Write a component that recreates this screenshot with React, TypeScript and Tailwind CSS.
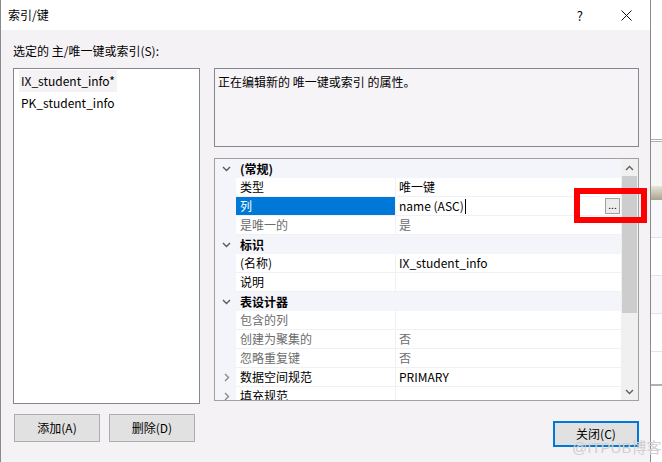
import React from "react";

type Row =
    | { kind: "cat"; label: string }
    | { kind: "prop"; name: string; value: string; gray?: boolean; expand?: boolean; selected?: boolean };

const rows: Row[] = [
    { kind: "cat", label: "(常规)" },
    { kind: "prop", name: "类型", value: "唯一键" },
    { kind: "prop", name: "列", value: "name (ASC)", selected: true },
    { kind: "prop", name: "是唯一的", value: "是", gray: true },
    { kind: "cat", label: "标识" },
    { kind: "prop", name: "(名称)", value: "IX_student_info" },
    { kind: "prop", name: "说明", value: "" },
    { kind: "cat", label: "表设计器" },
    { kind: "prop", name: "包含的列", value: "", gray: true },
    { kind: "prop", name: "创建为聚集的", value: "否", gray: true },
    { kind: "prop", name: "忽略重复键", value: "否", gray: true },
    { kind: "prop", name: "数据空间规范", value: "PRIMARY", expand: true },
    { kind: "prop", name: "填充规范", value: "", expand: true },
];

function Chevron({ open }: { open: boolean }) {
    return open ? (
        <svg width="9" height="6" viewBox="0 0 9 6" className="shrink-0">
            <polyline points="1,1 4.5,4.5 8,1" fill="none" stroke="#5a5a5a" strokeWidth="1.4" />
        </svg>
    ) : (
        <svg width="6" height="9" viewBox="0 0 6 9" className="shrink-0">
            <polyline points="1,1 4.5,4.5 1,8" fill="none" stroke="#8a8a8a" strokeWidth="1.4" />
        </svg>
    );
}

function PropertyRow({ row }: { row: Row }) {
    if (row.kind === "cat") {
        return (
            <div className="flex h-[19px] items-center bg-[#f4f4fb]">
                <div className="flex w-[21px] shrink-0 justify-center pl-[1px]">
                    <Chevron open />
                </div>
                <div className="pl-[4px] font-bold">{row.label}</div>
            </div>
        );
    }
    return (
        <div className="flex h-[19px] items-stretch">
            <div className="flex w-[21px] shrink-0 items-center justify-center bg-[#f4f4fb] pl-[3px]">
                {row.expand && <Chevron open={false} />}
            </div>
            <div
                className={`flex w-[160px] shrink-0 items-center border-b border-r border-[#f0f0f6] pl-[4px] ${
                    row.selected ? "bg-[#0078d7] text-white" : row.gray ? "text-[#6d6d6d]" : ""
                }`}
            >
                {row.name}
            </div>
            <div
                className={`flex flex-1 items-center border-b border-[#f0f0f6] pl-[3px] ${
                    row.gray ? "text-[#6d6d6d]" : ""
                }`}
            >
                {row.value}
                {row.selected && <span className="ml-[1px] h-[15px] w-px bg-black" />}
                {row.selected && (
                    <span className="ml-auto mr-[1px] flex h-[16px] w-[15px] items-end justify-center border border-[#a0a0a0] bg-[#ececec] pb-[3px] text-[10px] leading-none">
                        ...
                    </span>
                )}
            </div>
        </div>
    );
}

function Scrollbar() {
    return (
        <div className="flex w-[17px] shrink-0 flex-col bg-[#f0f0f0]">
            <div className="flex h-[17px] items-center justify-center">
                <svg width="9" height="6" viewBox="0 0 9 6">
                    <polyline points="1,5 4.5,1.5 8,5" fill="none" stroke="#606060" strokeWidth="1.4" />
                </svg>
            </div>
            <div className="mx-px h-[137px] bg-[#cdcdcd]" />
            <div className="flex-1" />
            <div className="flex h-[17px] items-center justify-center">
                <svg width="9" height="6" viewBox="0 0 9 6">
                    <polyline points="1,1 4.5,4.5 8,1" fill="none" stroke="#606060" strokeWidth="1.4" />
                </svg>
            </div>
        </div>
    );
}

function Button({ label, primary }: { label: string; primary?: boolean }) {
    return (
        <button
            className={`flex w-[86px] items-center justify-center bg-[#e1e1e1] ${
                primary ? "h-[26px] border-2 border-[#0078d7]" : "h-[28px] border border-[#adadad]"
            }`}
        >
            {label}
        </button>
    );
}

export default function App() {
    return (
        <div className="relative flex h-[462px] w-[662px] overflow-hidden bg-white text-[12px] leading-none text-black font-[Noto_Sans_CJK_SC,sans-serif]">
            <div className="flex w-[651px] shrink-0 flex-col border-l border-r border-[#8a8a8a]">
                <div className="flex h-[30px] shrink-0 items-center bg-white pl-[7px]">
                    <span>索引/键</span>
                    <span className="ml-auto mr-[38px] text-[13px]">?</span>
                    <svg width="11" height="11" viewBox="0 0 11 11" className="mr-[18px]">
                        <path d="M0.5 0.5 L10.5 10.5 M10.5 0.5 L0.5 10.5" stroke="#111" strokeWidth="1" />
                    </svg>
                </div>
                <div className="flex flex-1 flex-col bg-[#f5f2f5] pl-[12px] pt-[15px]">
                    <div className="h-[23px] pl-[-2px]">选定的 主/唯一键或索引(S):</div>
                    <div className="flex gap-[14px]">
                        <div className="flex w-[187px] flex-col">
                            <div className="h-[336px] border border-[#828790] bg-white pl-[5px] pt-px">
                                <div className="flex h-[22px] w-fit items-center bg-[#f5f2f5] pl-[2px] pr-[2px]">
                                    IX_student_info*
                                </div>
                                <div className="flex h-[21px] items-center pl-[2px]">PK_student_info</div>
                            </div>
                            <div className="mt-[10px] flex gap-[9px] pl-px">
                                <Button label="添加(A)" />
                                <Button label="删除(D)" />
                            </div>
                        </div>
                        <div className="flex w-[425px] flex-col">
                            <div className="h-[79px] border border-[#828790] bg-[#f7f4f7] pl-[3px] pt-[7px]">
                                正在编辑新的 唯一键或索引 的属性。
                            </div>
                            <div className="mt-[11px] flex h-[243px] overflow-hidden border border-[#a0a0a0] bg-white">
                                <div className="flex-1 overflow-hidden">
                                    {rows.map((row, i) => (
                                        <PropertyRow key={i} row={row} />
                                    ))}
                                </div>
                                <Scrollbar />
                            </div>
                            <div className="mt-[20px] flex justify-end">
                                <Button label="关闭(C)" primary />
                            </div>
                        </div>
                    </div>
                </div>
            </div>
            <div className="flex flex-1 flex-col bg-white">
                <div className="h-[139px]" />
                <div className="h-[3px] border-y border-[#b0b0b0]" />
                <div className="h-[44px] bg-[#f6f6f6]" />
                <div className="h-[14px] bg-gradient-to-b from-[#e8e6dc] to-[#a8a48c]" />
                <div className="h-[38px] border-b border-[#e4e4e4] bg-[#f8f8fc]" />
                <div className="h-[38px] border-b border-[#e4e4e4]" />
                <div className="h-[38px] border-b border-[#e4e4e4] bg-[#f8f8fc]" />
                <div className="h-[38px] border-b border-[#e4e4e4]" />
                <div className="h-[34px] border-b-2 border-[#b0b0b0]" />
                <div className="flex-1" />
            </div>
            <div className="absolute left-[574px] top-[188px] h-[35px] w-[73px] border-[6px] border-[#ff0000]" />
            <div className="absolute left-[572px] top-[440px] text-[15px] leading-none text-[#cfcfcf] font-[Liberation_Sans,Noto_Sans_CJK_SC,sans-serif]">
                @ITPUB博客
            </div>
        </div>
    );
}
